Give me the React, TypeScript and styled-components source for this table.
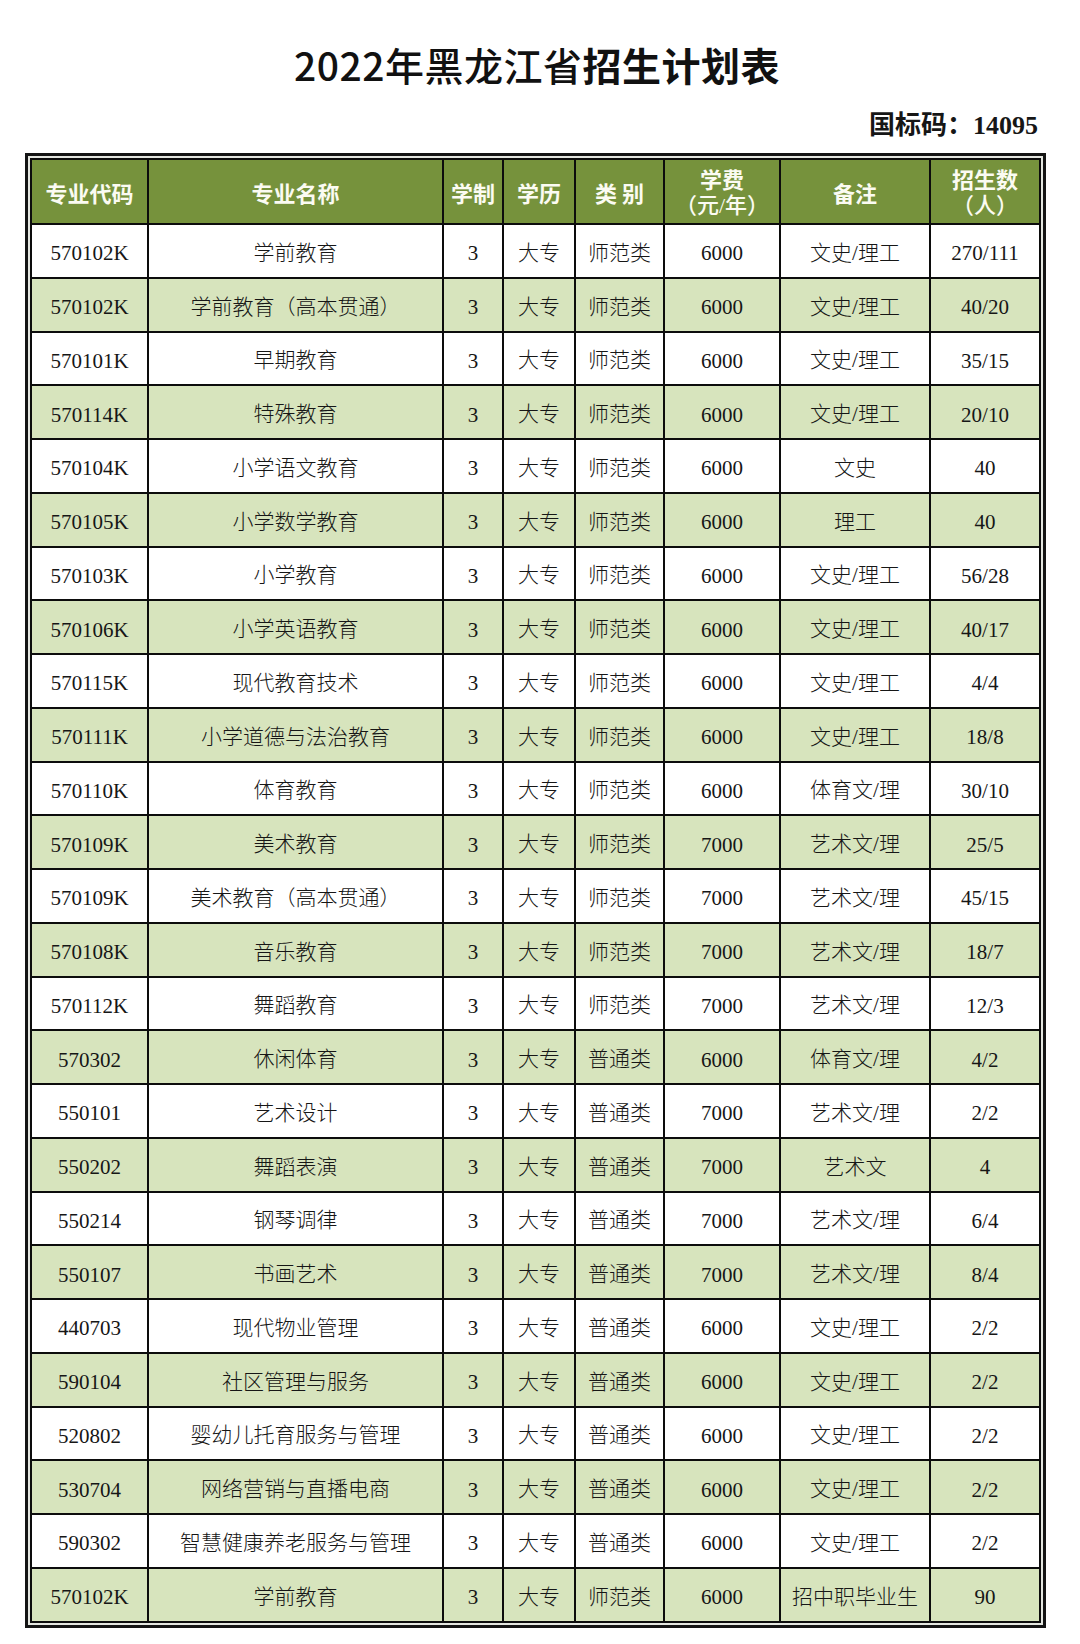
import styled, { createGlobalStyle } from "styled-components";

const GlobalStyle = createGlobalStyle`
  body {
    margin: 0;
    background: #ffffff;
    font-family: "Liberation Serif", "Noto Sans CJK SC", serif;
  }
`;

const Page = styled.div`
  width: 1080px;
  padding-bottom: 20px;
`;

const Title = styled.h1`
  margin: 43px 0 0 0;
  padding-right: 6px;
  text-align: center;
  font-family: "Noto Sans CJK SC", sans-serif;
  font-size: 39px;
  line-height: 42px;
  font-weight: 500;
  color: #111;
  letter-spacing: 0.5px;
`;

const Strong = styled.span`
  font-weight: 700;
`;

const CodeLine = styled.div`
  margin-top: 28px;
  padding-right: 42px;
  text-align: right;
  font-family: "Liberation Serif", "Noto Sans CJK SC", serif;
  font-size: 26px;
  line-height: 26px;
  font-weight: 700;
  color: #161616;
`;

const Frame = styled.div`
  margin: 14px 0 0 25px;
  width: fit-content;
  border: 3px solid #141414;
  padding: 2px;
  background: #e4e6e0;
`;

const Grid = styled.div`
  display: grid;
  grid-template-columns: 115px 293px 58px 70px 87px 114px 148px 108px;
  grid-template-rows: 63px repeat(26, 51.75px);
  gap: 2px;
  padding: 2px;
  background: #0c0c0c;
`;

const HeadCell = styled.div`
  display: flex;
  flex-direction: column;
  align-items: center;
  justify-content: center;
  background: #76923c;
  color: #fbfbf2;
  font-size: 22px;
  white-space: pre;
`;

// the second header line, as in the sheet, is set in the lighter serif face
const HeadLine = styled.span<{ $sub?: boolean }>`
  display: block;
  height: 28px;
  line-height: 28px;
  font-family: ${(p) =>
    p.$sub
      ? `"Liberation Serif", "Noto Sans CJK SC", serif`
      : `"Noto Sans CJK SC", sans-serif`};
  font-weight: ${(p) => (p.$sub ? 500 : 700)};
`;

const Cell = styled.div<{ $shade: boolean; $latin: boolean }>`
  display: flex;
  align-items: center;
  justify-content: center;
  padding-top: ${(p) => (p.$latin ? "6px" : "0")};
  background: ${(p) => (p.$shade ? "#d7e4bd" : "#ffffff")};
  color: #161616;
  font-family: "Liberation Serif", "Noto Sans CJK SC", serif;
  font-size: 21px;
  font-weight: 300;
  white-space: nowrap;
  text-spacing-trim: space-all;
`;

const heads: string[][] = [
  ["专业代码"],
  ["专业名称"],
  ["学制"],
  ["学历"],
  ["类 别"],
  ["学费", "（元/年）"],
  ["备注"],
  ["招生数", "（人）"],
];

const rows: string[][] = [
  ["570102K", "学前教育", "3", "大专", "师范类", "6000", "文史/理工", "270/111"],
  ["570102K", "学前教育（高本贯通）", "3", "大专", "师范类", "6000", "文史/理工", "40/20"],
  ["570101K", "早期教育", "3", "大专", "师范类", "6000", "文史/理工", "35/15"],
  ["570114K", "特殊教育", "3", "大专", "师范类", "6000", "文史/理工", "20/10"],
  ["570104K", "小学语文教育", "3", "大专", "师范类", "6000", "文史", "40"],
  ["570105K", "小学数学教育", "3", "大专", "师范类", "6000", "理工", "40"],
  ["570103K", "小学教育", "3", "大专", "师范类", "6000", "文史/理工", "56/28"],
  ["570106K", "小学英语教育", "3", "大专", "师范类", "6000", "文史/理工", "40/17"],
  ["570115K", "现代教育技术", "3", "大专", "师范类", "6000", "文史/理工", "4/4"],
  ["570111K", "小学道德与法治教育", "3", "大专", "师范类", "6000", "文史/理工", "18/8"],
  ["570110K", "体育教育", "3", "大专", "师范类", "6000", "体育文/理", "30/10"],
  ["570109K", "美术教育", "3", "大专", "师范类", "7000", "艺术文/理", "25/5"],
  ["570109K", "美术教育（高本贯通）", "3", "大专", "师范类", "7000", "艺术文/理", "45/15"],
  ["570108K", "音乐教育", "3", "大专", "师范类", "7000", "艺术文/理", "18/7"],
  ["570112K", "舞蹈教育", "3", "大专", "师范类", "7000", "艺术文/理", "12/3"],
  ["570302", "休闲体育", "3", "大专", "普通类", "6000", "体育文/理", "4/2"],
  ["550101", "艺术设计", "3", "大专", "普通类", "7000", "艺术文/理", "2/2"],
  ["550202", "舞蹈表演", "3", "大专", "普通类", "7000", "艺术文", "4"],
  ["550214", "钢琴调律", "3", "大专", "普通类", "7000", "艺术文/理", "6/4"],
  ["550107", "书画艺术", "3", "大专", "普通类", "7000", "艺术文/理", "8/4"],
  ["440703", "现代物业管理", "3", "大专", "普通类", "6000", "文史/理工", "2/2"],
  ["590104", "社区管理与服务", "3", "大专", "普通类", "6000", "文史/理工", "2/2"],
  ["520802", "婴幼儿托育服务与管理", "3", "大专", "普通类", "6000", "文史/理工", "2/2"],
  ["530704", "网络营销与直播电商", "3", "大专", "普通类", "6000", "文史/理工", "2/2"],
  ["590302", "智慧健康养老服务与管理", "3", "大专", "普通类", "6000", "文史/理工", "2/2"],
  ["570102K", "学前教育", "3", "大专", "师范类", "6000", "招中职毕业生", "90"],
];

const isLatin = (s: string) => /^[\x20-\x7e]+$/.test(s);

export default function App() {
  return (
    <Page>
      <GlobalStyle />
      <Title>
        2022年黑龙江省<Strong>招生计划表</Strong>
      </Title>
      <CodeLine>国标码：14095</CodeLine>
      <Frame>
        <Grid>
          {heads.map((h, i) => (
            <HeadCell key={"h" + i}>
              {h.map((line, j) => (
                <HeadLine key={j} $sub={j > 0}>
                  {line}
                </HeadLine>
              ))}
            </HeadCell>
          ))}
          {rows.map((r, ri) =>
            r.map((text, ci) => (
              <Cell key={ri + "-" + ci} $shade={ri % 2 === 1} $latin={isLatin(text)}>
                {text}
              </Cell>
            ))
          )}
        </Grid>
      </Frame>
    </Page>
  );
}
